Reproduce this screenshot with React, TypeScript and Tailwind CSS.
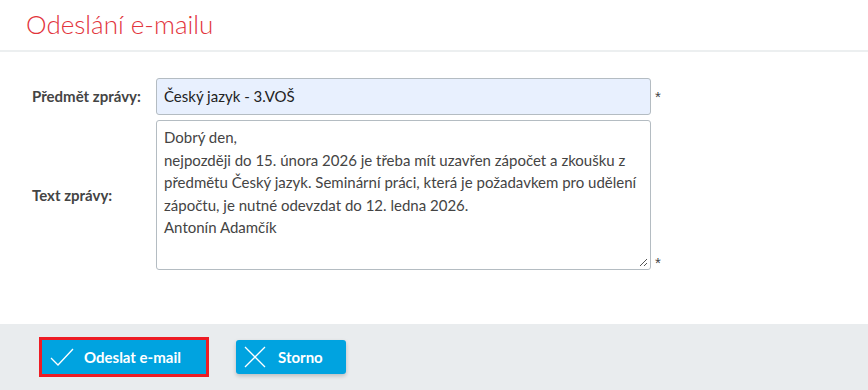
import React from 'react';

const lines = [
    'Dobrý den,',
    'nejpozději do 15. února 2026 je třeba mít uzavřen zápočet a zkoušku z',
    'předmětu Český jazyk. Seminární práci, která je požadavkem pro udělení',
    'zápočtu, je nutné odevzdat do 12. ledna 2026.',
    'Antonín Adamčík',
];

const CheckIcon = () => (
    <svg width="24" height="20" viewBox="0 0 24 20" fill="none" stroke="white" strokeWidth="1.3">
        <path d="M1 11 L8 18 L23 2" />
    </svg>
);

const CrossIcon = () => (
    <svg width="22" height="22" viewBox="0 0 22 22" fill="none" stroke="white" strokeWidth="1.3">
        <path d="M1 1 L21 21 M21 1 L1 21" />
    </svg>
);

export default function App() {
    return (
        <div className="w-[868px] h-[390px] bg-white flex flex-col font-['Lato','Noto_Sans',sans-serif] text-[#333]">
            <div className="h-[52px] border-b-2 border-[#eceff0] px-[26px] pt-[6px]">
                <h1 className="text-[26px] font-light text-[#e2343c] leading-[36px]">Odeslání e-mailu</h1>
            </div>

            <div className="flex-1 pt-[26px] pl-[32px]">
                <div className="flex items-center">
                    <div className="w-[124px] text-[15px] font-bold text-[#444]">Předmět zprávy:</div>
                    <div className="w-[495px] h-[37px] bg-[#e8f0fe] border border-[#b4bcc2] rounded-[3px] flex items-center px-[7px] text-[15px] text-[#222]">
                        Český jazyk - 3.VOŠ
                    </div>
                    <span className="ml-[4px] font-['Liberation_Sans',sans-serif] text-[15px] text-[#444] mt-[2px]">*</span>
                </div>

                <div className="flex items-center mt-[5px]">
                    <div className="w-[124px] text-[15px] font-bold text-[#444]">Text zprávy:</div>
                    <div className="relative w-[495px] h-[150px] border border-[#b4bcc2] rounded-[3px] px-[7px] pt-[5px] text-[15px] leading-[22.5px] text-[#444] whitespace-nowrap">
                        {lines.map((l) => (
                            <div key={l}>{l}</div>
                        ))}
                        <svg className="absolute right-[2px] bottom-[2px]" width="9" height="9" viewBox="0 0 9 9" stroke="#555" strokeWidth="1">
                            <path d="M1 8 L8 1 M5 8 L8 5" />
                        </svg>
                    </div>
                    <span className="ml-[4px] self-end font-['Liberation_Sans',sans-serif] text-[15px] text-[#444] -mb-[4px]">*</span>
                </div>
            </div>

            <div className="h-[66px] bg-[#e9ecee] flex items-center pl-[39px] gap-[27px]">
                <div className="border-[3px] border-[#ed1c24]">
                    <button className="h-[34px] w-[164px] bg-[#00a3e0] flex items-center pl-[8px] gap-[10px] text-white font-bold text-[15px]">
                        <CheckIcon />
                        <span>Odeslat e-mail</span>
                    </button>
                </div>
                <button className="h-[34px] w-[110px] bg-[#00a3e0] rounded-[3px] shadow-[0_2px_4px_rgba(0,0,0,0.2)] flex items-center pl-[8px] gap-[12px] text-white font-bold text-[15px]">
                    <CrossIcon />
                    <span>Storno</span>
                </button>
            </div>
        </div>
    );
}
